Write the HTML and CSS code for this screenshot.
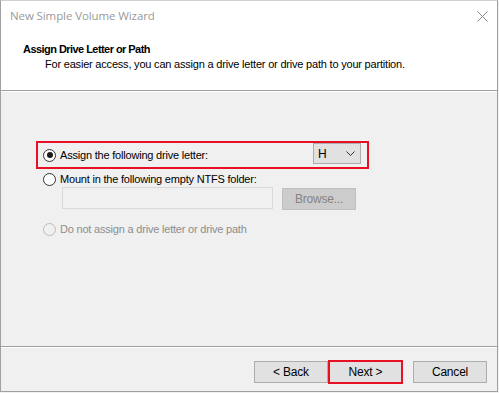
FILE: index.html
```html
<!DOCTYPE html>
<html>
<head>
<meta charset="utf-8">
<link rel="stylesheet" href="styles.css">
</head>
<body>
<div class="window">
  <div class="titlebar">
    <span class="title">New Simple Volume Wizard</span>
    <svg class="close" width="11" height="11" viewBox="0 0 11 11"><path d="M0.5 0.5 L10.5 10.5 M10.5 0.5 L0.5 10.5" stroke="#8a8a8a" stroke-width="1" fill="none"/></svg>
  </div>
  <div class="header">
    <div class="h-title">Assign Drive Letter or Path</div>
    <div class="h-desc">For easier access, you can assign a drive letter or drive path to your partition.</div>
  </div>
  <div class="content">
    <div class="row row-hl">
      <span class="radio checked"></span>
      <span class="label">Assign the following drive letter:</span>
      <div class="combo">
        <span class="combo-val">H</span>
        <svg class="chev" width="9" height="5" viewBox="0 0 9 5"><path d="M0.5 0.5 L4.5 4.5 L8.5 0.5" stroke="#333" stroke-width="1" fill="none"/></svg>
      </div>
    </div>
    <div class="row row-plain">
      <span class="radio"></span>
      <span class="label">Mount in the following empty NTFS folder:</span>
    </div>
    <div class="folder-row">
      <div class="textbox"></div>
      <div class="btn btn-disabled">Browse...</div>
    </div>
    <div class="row row-plain row-disabled">
      <span class="radio"></span>
      <span class="label">Do not assign a drive letter or drive path</span>
    </div>
  </div>
  <div class="footer">
    <div class="btn">&lt; Back</div>
    <div class="btn btn-next">Next &gt;</div>
    <div class="btn btn-cancel">Cancel</div>
  </div>
</div>
</body>
</html>
```
FILE: styles.css
```css
html, body {
  margin: 0;
  padding: 0;
}
body {
  background: #f0f0f0;
  font-family: "Liberation Sans", Arial, sans-serif;
  font-size: 11px;
  letter-spacing: -0.2px;
  color: #000;
}
.window {
  width: 496px;
  height: 390px;
  border: 1px solid #a0a0a0;
  border-top-color: #d0d0d0;
  background: #f0f0f0;
  display: flex;
  flex-direction: column;
}
.titlebar {
  height: 30px;
  background: #fff;
  display: flex;
  align-items: center;
  padding-left: 9px;
}
.title {
  font-family: "Open Sans", "Noto Sans", sans-serif;
  font-size: 11.5px;
  letter-spacing: -0.1px;
  color: #9a9a9a;
  flex: 1;
  margin-top: -1px;
}
.close {
  margin-right: 9px;
}
.header {
  background: #fff;
  border-bottom: 1px solid #a0a0a0;
  box-shadow: 0 1px 0 #ffffff;
  box-sizing: border-box;
  height: 60px;
  padding-top: 11px;
}
.h-title {
  font-weight: bold;
  letter-spacing: -0.55px;
  padding-left: 22px;
  line-height: 14px;
}
.h-desc {
  padding-left: 44px;
  line-height: 14px;
  margin-top: 1px;
}
.content {
  flex: 1;
  padding-top: 50px;
  padding-left: 35px;
  border-bottom: 1px solid #a0a0a0;
  box-shadow: 0 1px 0 #ffffff;
  display: flex;
  flex-direction: column;
  align-items: flex-start;
}
.row {
  display: flex;
  align-items: center;
}
.row-hl {
  height: 24px;
  border: 2px solid #e81123;
  padding-left: 5px;
  width: 324px;
}
.row-plain {
  height: 16px;
  margin-left: 7px;
}
.row-hl + .row-plain {
  margin-top: 2px;
}
.radio {
  width: 11px;
  height: 11px;
  border: 1px solid #333;
  border-radius: 50%;
  background: #fff;
  position: relative;
  flex: none;
}
.radio.checked::after {
  content: "";
  position: absolute;
  left: 2.5px;
  top: 2.5px;
  width: 6px;
  height: 6px;
  border-radius: 50%;
  background: #1a1a1a;
}
.label {
  margin-left: 4px;
}
.row-hl .label {
  flex: 1;
}
.row-disabled .radio {
  border-color: #bcbcbc;
  background: #f0f0f0;
}
.row-disabled .label {
  color: #8d8d8d;
}
.combo {
  align-self: flex-start;
  height: 19px;
  border: 1px solid #adadad;
  background: #e1e1e1;
  margin-right: 6px;
  display: flex;
  align-items: center;
  padding-left: 4px;
  width: 42px;
}
.combo-val {
  flex: 1;
  font-size: 12px;
  color: #000;
}
.chev {
  margin-right: 5px;
}
.folder-row {
  display: flex;
  align-items: flex-start;
  margin-left: 26px;
}
.textbox {
  width: 209px;
  height: 20px;
  border: 1px solid #d9d9d9;
  background: #f0f0f0;
}
.btn {
  width: 72px;
  height: 20px;
  border: 1px solid #adadad;
  background: #e1e1e1;
  display: flex;
  align-items: center;
  justify-content: center;
  font-size: 12px;
  letter-spacing: -0.2px;
  color: #000;
}
.btn-disabled {
  margin-left: 9px;
  margin-top: 1px;
  background: #cccccc;
  border-color: #bfbfbf;
  color: #838383;
}
.folder-row + .row-plain {
  margin-top: 11px;
}
.footer {
  height: 44px;
  display: flex;
  align-items: flex-start;
  padding-top: 14px;
  padding-left: 253px;
  box-sizing: border-box;
}
.btn-next {
  width: 71px;
  height: 20px;
  border: 2px solid #e81123;
  margin-top: -1px;
}
.btn-cancel {
  margin-left: 10px;
}
```
